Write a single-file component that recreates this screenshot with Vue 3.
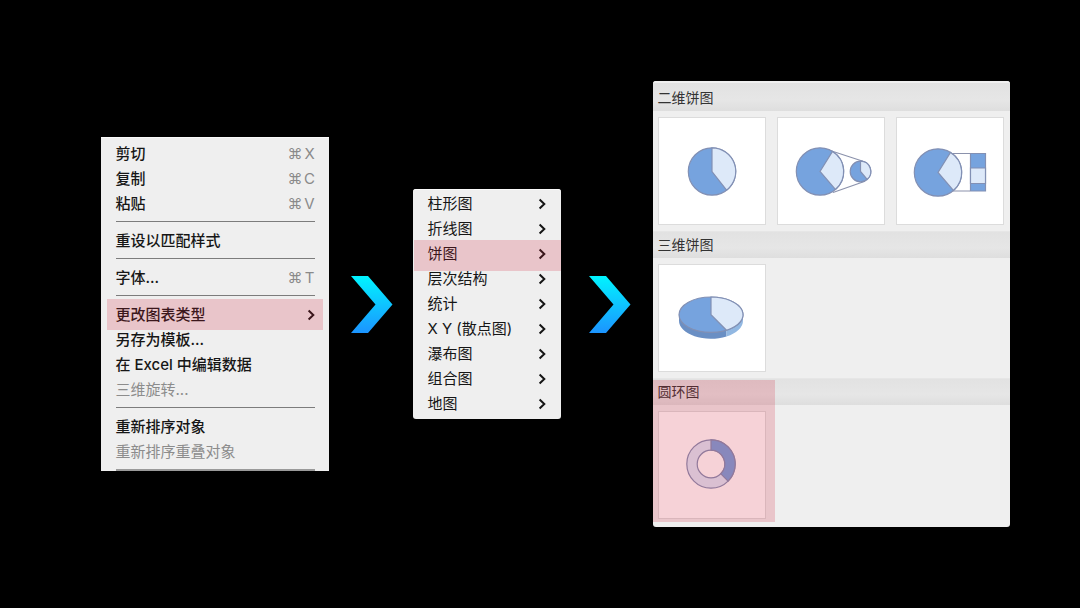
<script setup>
const editMenu = [
  { label: '剪切', key: 'X' },
  { label: '复制', key: 'C' },
  { label: '粘贴', key: 'V' },
  { sep: true },
  { label: '重设以匹配样式' },
  { sep: true },
  { label: '字体...', key: 'T' },
  { sep: true },
  { label: '更改图表类型', more: true, active: true },
  { label: '另存为模板...' },
  { label: '在 Excel 中编辑数据' },
  { label: '三维旋转...', disabled: true },
  { sep: true },
  { label: '重新排序对象' },
  { label: '重新排序重叠对象', disabled: true },
  { sep: true },
]

const chartTypes = ['柱形图', '折线图', '饼图', '层次结构', '统计', 'X Y (散点图)', '瀑布图', '组合图', '地图']
const activeType = '饼图'
</script>

<template>
  <main class="stage">
    <nav class="menu edit-menu" aria-label="编辑">
      <template v-for="(item, i) in editMenu" :key="i">
        <hr v-if="item.sep" class="sep" />
        <button v-else type="button" class="item" :class="{ active: item.active }" :disabled="item.disabled">
          <span>{{ item.label }}</span>
          <span v-if="item.key" class="shortcut"><span class="cmd">⌘</span><span class="letter">{{ item.key }}</span></span>
          <svg v-if="item.more" class="chevron" viewBox="0 0 8 12" aria-hidden="true"><path d="M1.6 1.6 6.3 6 1.6 10.4" /></svg>
        </button>
      </template>
    </nav>

    <svg class="arrow first" viewBox="0 0 42 57" aria-hidden="true">
      <defs>
        <linearGradient id="arrow-fill" x1="0" y1="0" x2="0" y2="1">
          <stop offset="0" stop-color="#00f4ff" />
          <stop offset="1" stop-color="#1c94ff" />
        </linearGradient>
      </defs>
      <path d="M0 0H17L41.5 28.5 17 57H0L24.5 28.5Z" fill="url(#arrow-fill)" />
    </svg>

    <nav class="menu type-menu" aria-label="更改图表类型">
      <button v-for="type in chartTypes" :key="type" type="button" class="item" :class="{ active: type === activeType }">
        <span>{{ type }}</span>
        <svg class="chevron" viewBox="0 0 8 12" aria-hidden="true"><path d="M1.6 1.6 6.3 6 1.6 10.4" /></svg>
      </button>
    </nav>

    <svg class="arrow second" viewBox="0 0 42 57" aria-hidden="true">
      <path d="M0 0H17L41.5 28.5 17 57H0L24.5 28.5Z" fill="url(#arrow-fill)" />
    </svg>

    <div class="gallery">
      <section class="group">
        <h2>二维饼图</h2>
        <div class="tiles">
          <button type="button" class="tile" aria-label="饼图">
            <svg viewBox="1 1 106 106">
              <circle class="dark" cx="54" cy="54.5" r="23.7" />
              <path class="light" d="M54 54.5V30.8A23.7 23.7 0 0 1 68.6 73.2Z" />
            </svg>
          </button>
          <button type="button" class="tile" aria-label="子母饼图">
            <svg viewBox="1 1 106 106">
              <path class="line" d="M50 32.5 86 44.3M56 75.5 88 64.3" />
              <circle class="dark" cx="43" cy="54.5" r="23.7" />
              <path class="light" d="M43 54.5 55.5 34.4A23.7 23.7 0 0 1 58.4 72.5Z" />
              <circle class="dark" cx="83.5" cy="54.5" r="10.3" />
              <path class="light" d="M83.5 54.5V44.2A10.3 10.3 0 0 1 90.2 62.3Z" />
            </svg>
          </button>
          <button type="button" class="tile" aria-label="复合条饼图">
            <svg viewBox="1 1 106 106">
              <path class="line" d="M54 36.5H74M56 74H74" />
              <circle class="dark" cx="42" cy="55.5" r="23.7" />
              <path class="light" d="M42 55.5 54.5 35.4A23.7 23.7 0 0 1 57.4 73.5Z" />
              <path class="dark" d="M74.5 36.5H89.5V74H74.5Z" />
              <path class="light" d="M74.5 51H89.5V66.5H74.5Z" />
            </svg>
          </button>
        </div>
      </section>

      <section class="group">
        <h2>三维饼图</h2>
        <div class="tiles">
          <button type="button" class="tile" aria-label="三维饼图">
            <svg viewBox="1 1 106 106">
              <path class="side" d="M21 50.5V56.5A32 18 0 0 0 68.5 72.5V66Z" />
              <path class="side-light" d="M68.5 66V72.5A32 18 0 0 0 85 56.5V50.5Z" />
              <ellipse class="dark" cx="53" cy="50.7" rx="32" ry="17.7" />
              <path class="light" d="M53 50.7V33A32 17.7 0 0 1 68.5 66.2Z" />
            </svg>
          </button>
        </div>
      </section>

      <section class="group active">
        <h2>圆环图</h2>
        <div class="tiles">
          <button type="button" class="tile" aria-label="圆环图">
            <svg viewBox="1 1 106 106">
              <path class="light" fill-rule="evenodd" d="M53 28.8A24.2 24.2 0 1 0 53 77.2 24.2 24.2 0 1 0 53 28.8ZM53 39.2A13.8 13.8 0 1 1 53 66.8 13.8 13.8 0 1 1 53 39.2Z" />
              <path class="dark" d="M53 28.8A24.2 24.2 0 0 1 70.1 70.1L62.8 62.8A13.8 13.8 0 0 0 53 39.2Z" />
            </svg>
          </button>
        </div>
      </section>
    </div>
  </main>
</template>

<style>
body {
  background: #000;
}
</style>

<style scoped>
.stage {
  --mark: rgba(209, 30, 54, 0.2);
  display: flex;
  align-items: center;
  justify-content: center;
  min-height: 100vh;
  box-sizing: border-box;
  padding-left: 30px;
  background: #000;
  font-family: Inter, "Noto Sans CJK SC", sans-serif;
}

.menu {
  flex: none;
  box-sizing: border-box;
  background: #efefef;
  box-shadow: inset 0 1px #fafafa;
}

.edit-menu {
  width: 228px;
  padding-top: 4px;
}

.type-menu {
  width: 148px;
  padding: 2px 0 3px;
  border-radius: 3px;
}

.item {
  position: relative;
  display: flex;
  align-items: center;
  justify-content: space-between;
  width: 100%;
  height: 25px;
  padding: 0 14px 0 15px;
  border: 0;
  background: none;
  color: #161616;
  font: inherit;
  font-size: 15px;
  font-weight: 500;
  line-height: 25px;
  text-align: left;
  white-space: nowrap;
}

.type-menu .item {
  font-weight: 400;
}

.item:disabled {
  color: #8c8c8c;
  font-weight: 400;
}

.item.active::after {
  content: "";
  position: absolute;
  inset: -3px 6px;
  background: var(--mark);
}

.type-menu .item.active::after {
  inset: -1px 0 -5px 1px;
}

.shortcut {
  display: flex;
  gap: 1px;
  margin-right: -1px;
  color: #8a8a8a;
  font-weight: 400;
}

.letter {
  width: 12px;
  text-align: center;
}

.chevron {
  width: 8px;
  height: 12px;
  fill: none;
  stroke: #151515;
  stroke-width: 2;
}

.sep {
  height: 1px;
  margin: 5px 14px 6px 15px;
  border: 0;
  background: #7c7c7c;
}

.sep:last-child {
  height: 2px;
  margin-bottom: 0;
  background: #9a9a9a;
}

.type-menu .chevron {
  margin-right: 1px;
}

.arrow {
  flex: none;
  width: 42px;
  height: 57px;
}

.first {
  margin: 0 20px 0 22px;
}

.second {
  margin: 0 22px 0 28px;
}

.gallery {
  flex: none;
  box-sizing: border-box;
  width: 357px;
  padding-bottom: 2px;
  border-radius: 3px;
  background: #efefef;
  overflow: hidden;
}

.group {
  position: relative;
}

.group h2 {
  box-sizing: border-box;
  height: 27px;
  margin: 0;
  padding-left: 5px;
  border-top: 1px solid #e6e6e6;
  background: linear-gradient(#e2e2e2, #e6e6e6 60%, #dedede);
  color: #333;
  font-size: 14px;
  font-weight: 400;
  line-height: 26px;
}

.group:first-child h2 {
  height: 30px;
  border-top: 2px solid #f0f0f0;
  line-height: 29px;
}

.group.active::after {
  content: "";
  position: absolute;
  top: 2px;
  left: 0;
  width: 122px;
  bottom: 3px;
  background: var(--mark);
}

.tiles {
  display: flex;
  gap: 11px;
  padding: 6px 4px 6px 5px;
}

.tile {
  box-sizing: border-box;
  width: 108px;
  height: 108px;
  padding: 0;
  border: 1px solid #dcdcdc;
  background: #fff;
}

.tile svg {
  display: block;
  width: 100%;
}

.dark,
.light {
  stroke: #8290b4;
  stroke-width: 1.2;
}

.dark {
  fill: #76a3de;
}

.light {
  fill: #dde9f9;
}

.line {
  fill: none;
  stroke: #8b92ac;
  stroke-width: 1.2;
}

.side {
  fill: #6a8fc4;
}

.side-light {
  fill: #92b8e2;
}
</style>
